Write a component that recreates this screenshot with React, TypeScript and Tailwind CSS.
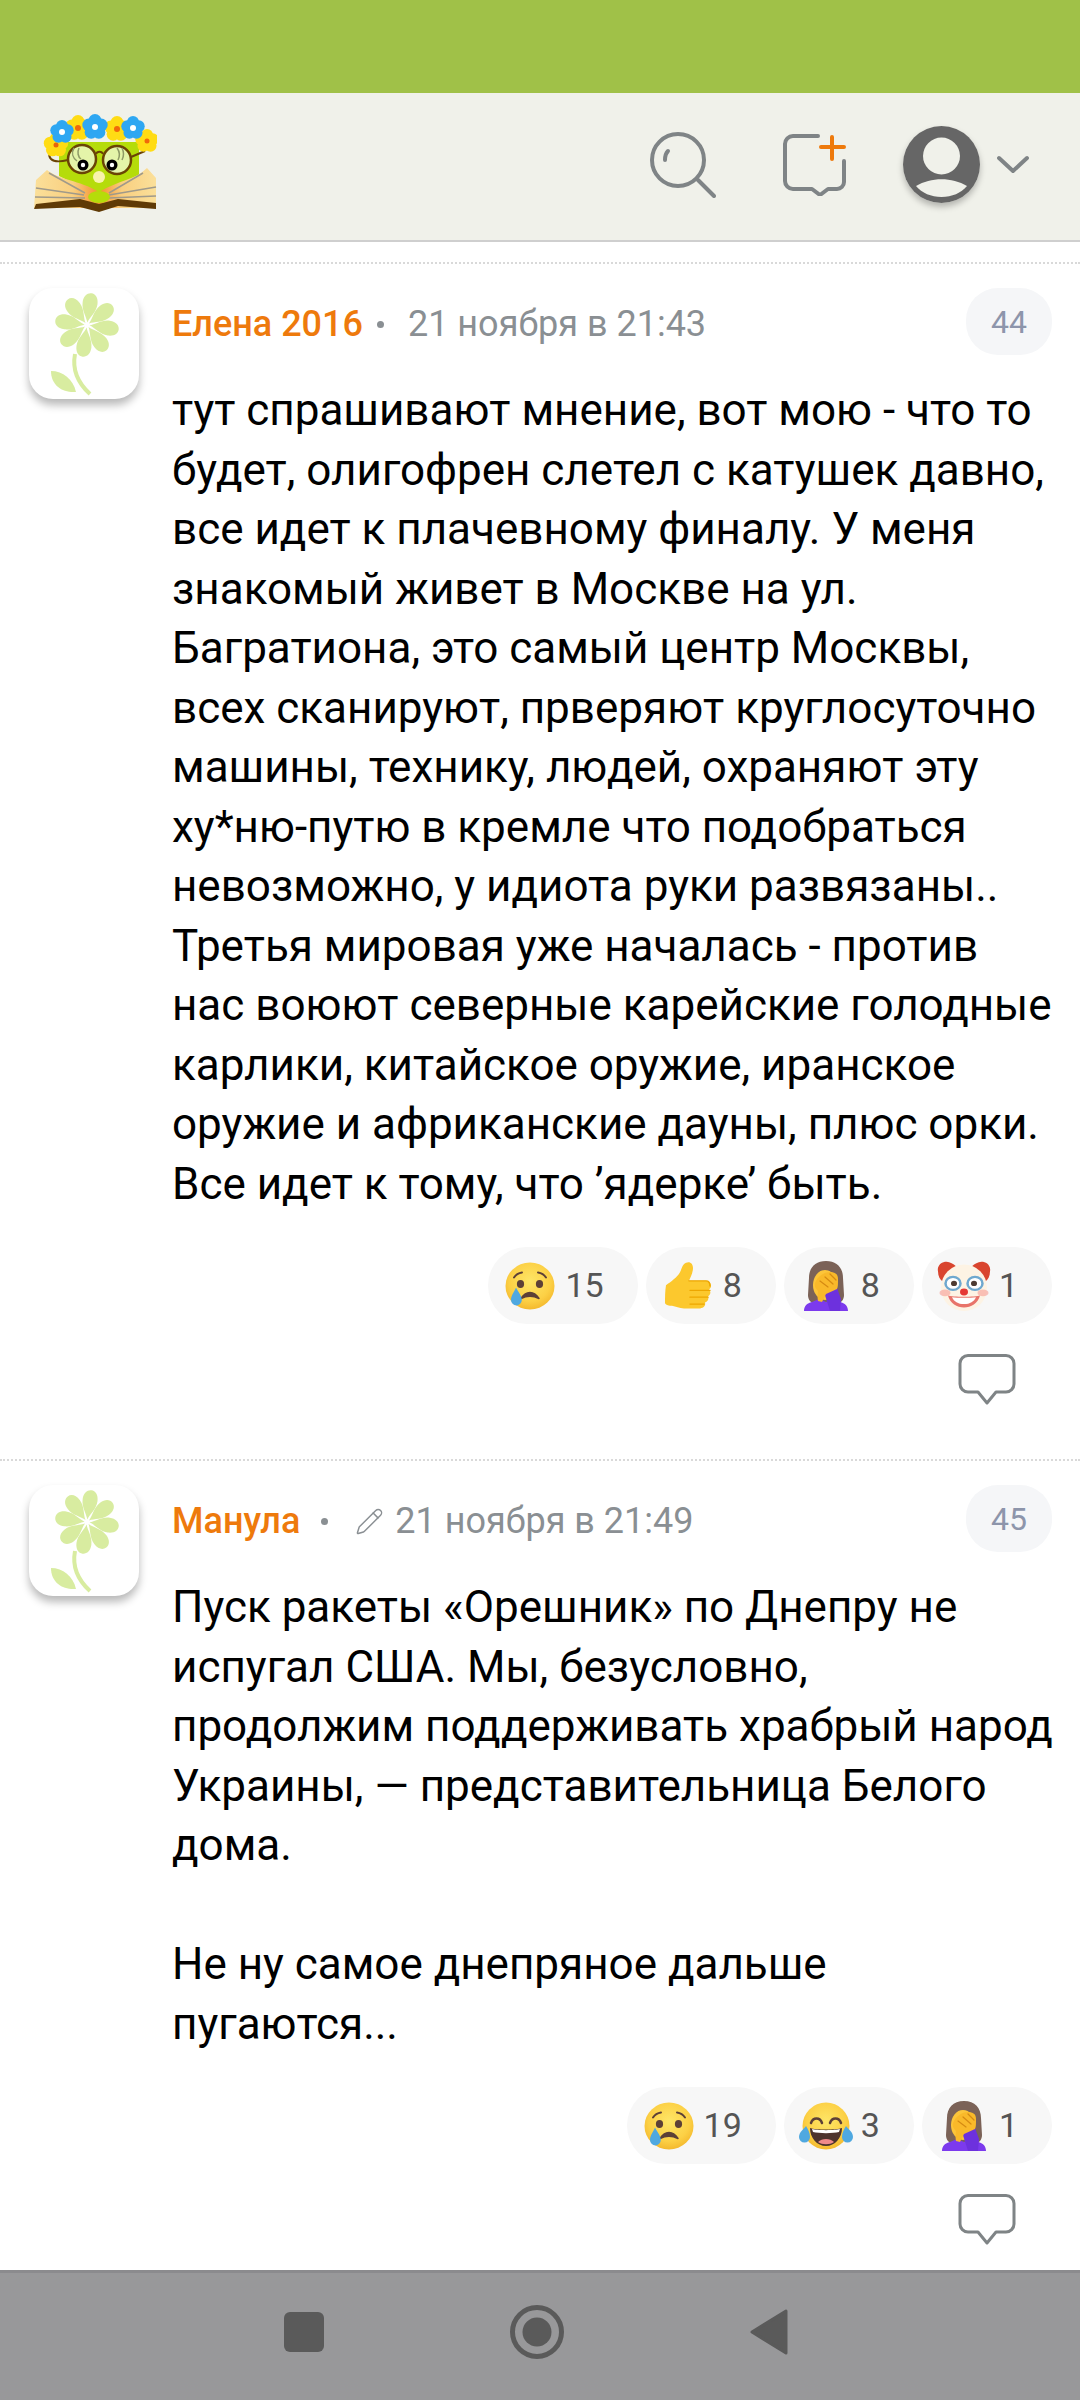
import React from 'react';
import { Pencil } from 'lucide-react';

const roboto = { fontFamily: 'Roboto, sans-serif' };

// --- emoji drawings ---

const Defs = () => (
    <svg width="0" height="0" className="absolute">
        <defs>
            <radialGradient id="faceFill" cx="50%" cy="40%" r="60%">
                <stop offset="0%" stopColor="#fee667" />
                <stop offset="70%" stopColor="#fcd045" />
                <stop offset="100%" stopColor="#f4b92e" />
            </radialGradient>
            <linearGradient id="pageL" x1="0" x2="1" y1="0" y2="0">
                <stop offset="0%" stopColor="#fbe09a" />
                <stop offset="60%" stopColor="#f9cf80" />
                <stop offset="100%" stopColor="#f58f2c" />
            </linearGradient>
            <linearGradient id="pageR" x1="1" x2="0" y1="0" y2="0">
                <stop offset="0%" stopColor="#fbe09a" />
                <stop offset="60%" stopColor="#f9cf80" />
                <stop offset="100%" stopColor="#f58f2c" />
            </linearGradient>
        </defs>
    </svg>
);

const CryFace = () => (
    <svg viewBox="0 0 50 48" className="h-[48px] w-[50px]">
        <ellipse cx="25" cy="24" rx="24.5" ry="23.5" fill="url(#faceFill)" />
        <path d="M9 15.500c2-3 5-4.500 8-5" stroke="#5d4037" strokeWidth="2" strokeLinecap="round" fill="none" />
        <path d="M41 15.500c-2-3-5-4.500-8-5" stroke="#5d4037" strokeWidth="2" strokeLinecap="round" fill="none" />
        <ellipse cx="15.500" cy="22" rx="3.600" ry="4" fill="#5d4037" />
        <ellipse cx="34.500" cy="22" rx="3.600" ry="4" fill="#5d4037" />
        <path d="M16 36.500c3-4.500 6-6 9-6s6 1.500 9 6c-3-1.500-6-2.200-9-2.200s-6 .7-9 2.200z" fill="#5d4037" stroke="#5d4037" strokeWidth="1.500" strokeLinejoin="round" />
        <path d="M11 25.500c-1.500 4-5 8-5 12.500a5.400 5.400 0 0 0 10.800 0c0-4.500-4-8.500-5.800-12.500z" fill="#4fa8e0" />
    </svg>
);

const Thumb = () => (
    <svg viewBox="0 0 48 58" preserveAspectRatio="none" className="h-[50px] w-[48px]">
        <path d="M2 28c5-4 11-9 14-15 2-4 2-9 6-11 4-2 7 1 7 6 0 6-3 12-4 15h16c4 0 6 3 6 6 0 2-1 3-2 4 2 2 2 6-1 8 1 3 0 6-3 7 1 4-2 7-6 7H20c-5 0-8-2-12-3-3 0-6-1-7-3 0-7 0-14 1-21z" fill="#fcc82d" />
        <path d="M25 23h17c3 0 4 3 4 6M26 34h20M26 42h18M26 50h14" stroke="#eda600" strokeWidth="1.500" fill="none" strokeLinecap="round" />
    </svg>
);

const Facepalm = () => (
    <svg viewBox="0 0 44 50" className="h-[50px] w-[44px]">
        {/* hair */}
        <path d="M22 0C11 0 5 7 5 17L4 34c0 4 2 7 5 8h26c3-1 5-4 5-8l-1-17C39 7 33 0 22 0z" fill="#7b6257" />
        {/* face */}
        <ellipse cx="21" cy="24" rx="12" ry="15" fill="#fcc53a" />
        {/* shoulders */}
        <path d="M0 50c0-5 3-8 8-9l7-3 7 3 6-3 8 3c5 1 8 4 8 9z" fill="#7c3aed" />
        {/* sleeve */}
        <path d="M20 31l13-4 4 11-1 12H26z" fill="#6d31dd" />
        {/* hand */}
        <path d="M11 22c3-7 9-11 15-11 5 0 8 2 8 7 0 5 0 8-1 10l-11 5-4 8-4-1c-1-4 0-8 0-10-2-2-4-5-3-8z" fill="#f9b92a" />
        <path d="M16 20l8 6M21 16l8 7M26 13l6 6" stroke="#d68a12" strokeWidth="1.200" strokeLinecap="round" fill="none" />
    </svg>
);

const Clown = () => (
    <svg viewBox="0 0 54 58" preserveAspectRatio="none" className="h-[50px] w-[54px]">
        <path d="M8 1C3 2 0 7 1 12c0 6 2 10 5 12L19 6C16 3 12 0 8 1zM46 1c5 1 8 6 7 11 0 6-2 10-5 12L35 6c3-3 7-6 11-5z" fill="#d9452f" />
        <ellipse cx="27" cy="31" rx="23" ry="27" fill="#fdf3e4" />
        <circle cx="16" cy="26" r="7.500" fill="#fff" stroke="#6fa8cf" strokeWidth="2.500" />
        <circle cx="38" cy="26" r="7.500" fill="#fff" stroke="#6fa8cf" strokeWidth="2.500" />
        <circle cx="17" cy="26" r="3" fill="#4e3b32" />
        <circle cx="37" cy="26" r="3" fill="#4e3b32" />
        <ellipse cx="8" cy="37" rx="5.500" ry="4" fill="#f7a8a0" opacity=".7" />
        <ellipse cx="46" cy="37" rx="5.500" ry="4" fill="#f7a8a0" opacity=".7" />
        <path d="M11 40c4 2 28 2 32 0-2 9-9 14-16 14s-14-5-16-14z" fill="#e8746a" />
        <path d="M15 42c6 1 18 1 24 0-2 5-6 8-12 8s-10-3-12-8z" fill="#fff" />
        <circle cx="27" cy="36" r="4" fill="#e53935" />
    </svg>
);

const JoyFace = () => (
    <svg viewBox="0 0 54 48" className="h-[48px] w-[54px]">
        <circle cx="27" cy="24" r="23.500" fill="url(#faceFill)" />
        <path d="M12 21c2-6 9-6 11 0M31 21c2-6 9-6 11 0" stroke="#5d4037" strokeWidth="2.500" strokeLinecap="round" fill="none" />
        <path d="M11 26c5 2 27 2 32 0 0 10-7 18-16 18s-16-8-16-18z" fill="#4e342e" />
        <path d="M13 27c5 1.500 23 1.500 28 0l-1 3c-6 1.500-20 1.500-26 0z" fill="#fff" />
        <path d="M19 40c4-4 12-4 16 0-4 3-12 3-16 0z" fill="#ef8a8a" />
        <path d="M7 24c-2 3-7 6-7 11a5.500 5.500 0 0 0 11 0c0-4-2-8-4-11zM47 24c2 3 7 6 7 11a5.500 5.500 0 0 1-11 0c0-4 2-8 4-11z" fill="#4fa8e0" />
    </svg>
);

// --- site graphics ---

const Bloom = ({ x, y, r, off, petal, core, coreR }: { x: number; y: number; r: number; off: number; petal: string; core: string; coreR: number }) => (
    <g>
        {[0, 72, 144, 216, 288].map((a) => (
            <circle key={a} cx={x + off * Math.sin((a * Math.PI) / 180)} cy={y - off * Math.cos((a * Math.PI) / 180)} r={r} fill={petal} />
        ))}
        <circle cx={x} cy={y} r={coreR} fill={core} />
    </g>
);

const Logo = () => (
    <svg viewBox="15 33 123 100" className="h-[100px] w-[123px]">
        <path d="M40 62h80v34l-40 20-40-20z" fill="#b5dc0a" />
        <path d="M15 128l2-28 11-10c12 10 32 10 52 22v16z" fill="url(#pageL)" />
        <path d="M137 128V98l-9-10c-12 12-28 12-48 24v16z" fill="url(#pageR)" />
        <path d="M17 108l48 7M16 117l50 1M30 93l36 20M137 107l-47 8M137 116l-47 2M124 93l-34 20" stroke="#a09a8a" strokeWidth="1.500" />
        <path d="M15 129l2-5 44-5 19 5 19-5 38 4v6l-38-3-19 6-19-5z" fill="#5f3a06" />
        <ellipse cx="80" cy="117" rx="11" ry="6" fill="#b5dc0a" />
        <circle cx="80" cy="97" r="6" fill="#f9f3ac" />
        <circle cx="63" cy="79" r="14" fill="#e4f4a9" stroke="#6a4405" strokeWidth="2.500" />
        <circle cx="98" cy="80" r="14" fill="#e4f4a9" stroke="#6a4405" strokeWidth="2.500" />
        <path d="M77 74c1-3 6-3 7 0" stroke="#6a4405" strokeWidth="2" fill="none" />
        <path d="M49 80c-8 2-14 2-17-1-3-3-2-8 4-9M112 77l14-6" stroke="#6a4405" strokeWidth="2" fill="none" />
        <path d="M55 68c-3 5-1 10 3 13M60 68c-2 4-1 9 2 11M98 68c3 4 3 8 1 12M103 68c2 4 2 8 0 12" stroke="#8e9a66" strokeWidth="1.500" fill="none" />
        <circle cx="64" cy="85" r="5.500" fill="#000" />
        <circle cx="93" cy="85" r="5.500" fill="#000" />
        <circle cx="64" cy="85" r="2.200" fill="#fff" />
        <circle cx="93" cy="85" r="2.200" fill="#fff" />
        <Bloom x={37} y={65} r={6.500} off={6} petal="#ffdc14" core="#e8640a" coreR={2.500} />
        <Bloom x={59} y={48} r={6.500} off={6.500} petal="#ffdc14" core="#f1690a" coreR={3} />
        <Bloom x={98} y={49} r={6.500} off={6.500} petal="#ffdc14" core="#f1690a" coreR={3} />
        <Bloom x={128} y={61} r={6} off={6} petal="#ffdc14" core="#f1690a" coreR={2.500} />
        <Bloom x={43} y={52} r={6} off={6} petal="#2ea7f2" core="#fff" coreR={3} />
        <Bloom x={76} y={47} r={6.500} off={6.500} petal="#2ea7f2" core="#fff" coreR={3} />
        <Bloom x={114} y={48} r={6} off={6} petal="#2ea7f2" core="#fff" coreR={3} />
    </svg>
);

const Avatar = () => (
    <div className="h-[111px] w-[110px] shrink-0 rounded-[24px] bg-white shadow-[0_6px_8px_rgba(0,0,0,0.28)]">
        <svg viewBox="0 0 110 111" className="h-[111px] w-[110px]">
            {[8, 53, 98, 143, 188, 233, 278, 323].map((a) => (
                <path
                    key={a}
                    transform={`translate(58 37) rotate(${a})`}
                    d="M0-2.500C-1.500-8-7.500-14-7.500-22-7.500-28.500-4-32 0-32S7.500-28.500 7.500-22C7.500-14 1.500-8 0-2.500Z"
                    fill="#d8eca0"
                />
            ))}
            <path d="M46 66c-3 16 4 30 15 40" stroke="#d8eca0" strokeWidth="4" fill="none" />
            <path d="M22 83c12 0 22 8 25 21-13 1-25-6-25-21z" fill="#d8eca0" />
        </svg>
    </div>
);

const CommentIcon = ({ width }: { width: number }) => (
    <svg viewBox={`0 0 ${width} 52`} className="h-[52px]" style={{ width }}>
        <path
            d={`M10 1.500H${width - 10}a8 8 0 0 1 8 8V30a8 8 0 0 1-8 8H${width / 2 + 9}L${width / 2} 49 ${width / 2 - 9} 38H10a8 8 0 0 1-8-8V9.500a8 8 0 0 1 8-8Z`}
            fill="none"
            stroke="#7f8486"
            strokeWidth="3"
            strokeLinejoin="round"
        />
    </svg>
);

// --- comment parts ---

interface Reaction {
    icon: React.ReactNode;
    count: number;
}

const ReactionPill: React.FC<Reaction> = ({ icon, count }) => (
    <div className="flex h-[77px] items-center rounded-full bg-[#f7f7f7] pl-[15px] pr-[34px]">
        <span className="flex w-[54px] justify-center">{icon}</span>
        <span className="ml-[8px] text-[34px] text-[#555]">{count}</span>
    </div>
);

interface CommentProps {
    name: string;
    dotClass: string;
    edited?: boolean;
    date: string;
    num: number;
    lines: string[];
    reactions: Reaction[];
    bottomGap: string;
}

const Comment: React.FC<CommentProps> = ({ name, dotClass, edited, date, num, lines, reactions, bottomGap }) => (
    <div className={`flex gap-[33px] border-t-2 border-dotted border-[#d9d9d9] pl-[29px] pr-[28px] pt-[24px] ${bottomGap}`}>
        <Avatar />
        <div className="min-w-0 flex-1">
            <div className="flex h-[68px] items-start justify-between">
                <div className="flex items-center pt-[12px] text-[#8a8f93]">
                    <span className="text-[36px] font-medium leading-[48px] text-[#ee7a0c]">{name}</span>
                    <span className={`h-[7px] w-[7px] rounded-full bg-[#8a8f93] ${dotClass}`} />
                    {edited && <Pencil size={29} strokeWidth={1.2} className="mr-[11px]" />}
                    <span className="text-[36px] leading-[48px]">{date}</span>
                </div>
                <div className="flex h-[67px] w-[86px] items-center justify-center rounded-[32px] bg-[#f5f6f8] text-[32px] text-[#8d95ab]">{num}</div>
            </div>
            <div className="mt-[25px] whitespace-nowrap text-[44px] leading-[59.5px] text-black">
                {lines.map((line, i) => (
                    <div key={i} className="min-h-[59.5px]">
                        {line}
                    </div>
                ))}
            </div>
            <div className="mt-[33px] flex justify-end gap-[8px]">
                {reactions.map((r, i) => (
                    <ReactionPill key={i} {...r} />
                ))}
            </div>
            <div className="mt-[30px] flex justify-end pr-[36px]">
                <CommentIcon width={58} />
            </div>
        </div>
    </div>
);

const App: React.FC = () => {
    return (
        <div className="flex h-[2400px] w-[1080px] flex-col overflow-hidden bg-white" style={roboto}>
            <Defs />
            {/* status bar */}
            <div className="h-[93px] shrink-0 bg-[#a0c148]" />

            {/* site header */}
            <div className="flex h-[149px] shrink-0 items-center border-b-2 border-[#cfcfcf] bg-[#f0f1ea] pl-[34px] pr-[51px]">
                <div className="mb-[8px]">
                    <Logo />
                </div>
                <div className="mb-[4px] ml-auto flex items-center">
                    <svg viewBox="0 0 66 66" className="h-[66px] w-[66px]">
                        <circle cx="28" cy="28" r="26" fill="none" stroke="#7f8486" strokeWidth="4" />
                        <path d="M48 48l16 16" stroke="#7f8486" strokeWidth="4" strokeLinecap="round" />
                        <path d="M15 28c0-4 1-7 3-9" stroke="#7f8486" strokeWidth="4" strokeLinecap="round" fill="none" />
                    </svg>
                    <svg viewBox="0 0 64 62" className="ml-[66px] h-[62px] w-[64px]">
                        <path d="M36 2H11a8 8 0 0 0-8 8v37a8 8 0 0 0 8 8h19l8 6 8-6h9a7 7 0 0 0 7-7V27" fill="none" stroke="#7f8486" strokeWidth="4" strokeLinecap="round" strokeLinejoin="round" />
                        <path d="M50 3v22M39 13h23" stroke="#ee7a0c" strokeWidth="4" strokeLinecap="round" />
                    </svg>
                    <div className="ml-[57px] h-[77px] w-[77px] rounded-full shadow-[0_4px_6px_rgba(0,0,0,0.25)]">
                        <svg viewBox="0 0 77 77" className="h-[77px] w-[77px]">
                            <circle cx="38.500" cy="38.500" r="38.500" fill="#666" />
                            <circle cx="38.500" cy="30" r="18.500" fill="#f0f1ea" />
                            <path d="M13 60c15-9 36-9 51 0-6 7-15 11-25.500 11S19 67 13 60z" fill="#f0f1ea" />
                        </svg>
                    </div>
                    <svg viewBox="0 0 32 20" className="ml-[17px] h-[20px] w-[32px]">
                        <path d="M2 3l14 13L30 3" fill="none" stroke="#7f8486" strokeWidth="4" strokeLinecap="round" strokeLinejoin="round" />
                    </svg>
                </div>
            </div>

            {/* comments */}
            <div className="min-h-0 flex-1 overflow-hidden pt-[20px]">
                <Comment
                    name="Елена 2016"
                    dotClass="ml-[14px] mr-[24px]"
                    date="21 ноября в 21:43"
                    num={44}
                    lines={[
                        'тут спрашивают мнение, вот мою - что то',
                        'будет, олигофрен слетел с катушек давно,',
                        'все идет к плачевному финалу. У меня',
                        'знакомый живет в Москве на ул.',
                        'Багратиона, это самый центр Москвы,',
                        'всех сканируют, прверяют круглосуточно',
                        'машины, технику, людей, охраняют эту',
                        'ху*ню-путю в кремле что подобраться',
                        'невозможно, у идиота руки развязаны..',
                        'Третья мировая уже началась - против',
                        'нас воюют северные карейские голодные',
                        'карлики, китайское оружие, иранское',
                        'оружие и африканские дауны, плюс орки.',
                        'Все идет к тому, что ’ядерке’ быть.',
                    ]}
                    reactions={[
                        { icon: <CryFace />, count: 15 },
                        { icon: <Thumb />, count: 8 },
                        { icon: <Facepalm />, count: 8 },
                        { icon: <Clown />, count: 1 },
                    ]}
                    bottomGap="pb-[53px]"
                />
                <Comment
                    name="Манула"
                    dotClass="ml-[21px] mr-[27px]"
                    edited
                    date="21 ноября в 21:49"
                    num={45}
                    lines={[
                        'Пуск ракеты «Орешник» по Днепру не',
                        'испугал США. Мы, безусловно,',
                        'продолжим поддерживать храбрый народ',
                        'Украины, — представительница Белого',
                        'дома.',
                        '',
                        'Не ну самое днепряное дальше',
                        'пугаются...',
                    ]}
                    reactions={[
                        { icon: <CryFace />, count: 19 },
                        { icon: <JoyFace />, count: 3 },
                        { icon: <Facepalm />, count: 1 },
                    ]}
                    bottomGap=""
                />
            </div>

            {/* android nav bar */}
            <div className="flex h-[130px] shrink-0 items-center justify-center gap-[186px] border-t-[3px] border-[#8b8b8e] bg-[#98989a] pb-[10px] pr-[8px]">
                <div className="h-[40px] w-[40px] rounded-[6px] bg-[#5a5a5a]" />
                <svg viewBox="0 0 54 54" className="h-[54px] w-[54px]">
                    <circle cx="27" cy="27" r="24.500" fill="none" stroke="#5a5a5a" strokeWidth="5" />
                    <circle cx="27" cy="27" r="14.500" fill="#5a5a5a" />
                </svg>
                <svg viewBox="0 0 38 46" className="h-[46px] w-[38px]">
                    <path d="M36 2v42L2 23z" fill="#5a5a5a" stroke="#5a5a5a" strokeWidth="3" strokeLinejoin="round" />
                </svg>
            </div>
        </div>
    );
};

export default App;
